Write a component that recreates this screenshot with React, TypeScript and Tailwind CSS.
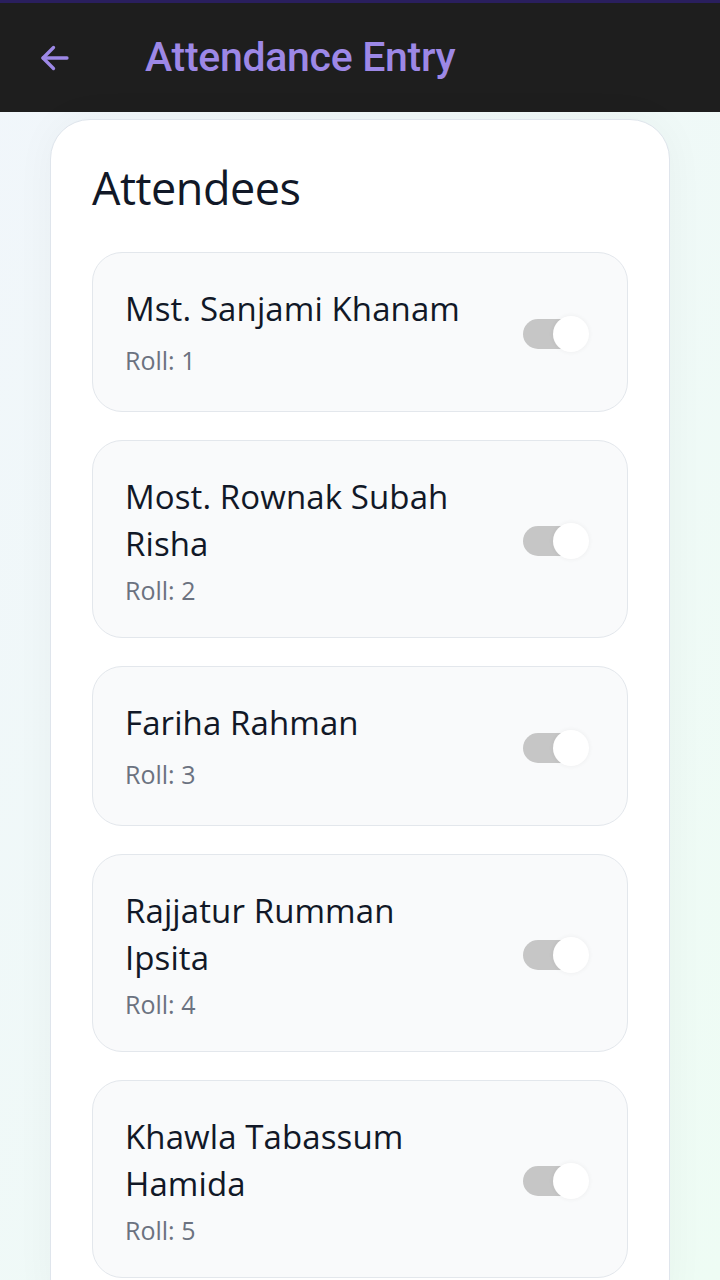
import React from "react";

const people = [
  { name: "Mst. Sanjami Khanam", roll: 1 },
  { name: "Most. Rownak Subah Risha", roll: 2 },
  { name: "Fariha Rahman", roll: 3 },
  { name: "Rajjatur Rumman Ipsita", roll: 4 },
  { name: "Khawla Tabassum Hamida", roll: 5 },
];

function Toggle() {
  return (
    <div className="relative w-[66px] h-[36px] shrink-0 self-center">
      <div className="absolute left-0 top-[3px] w-[56px] h-[30px] rounded-full bg-[#c6c6c6]" />
      <div className="absolute right-0 top-0 w-[36px] h-[36px] rounded-full bg-white shadow-[0_0_5px_rgba(0,0,0,0.06)]" />
    </div>
  );
}

export default function App() {
  return (
    <div className="w-[720px] h-[1280px] overflow-hidden flex flex-col bg-gradient-to-br from-[#f1f6fb] to-[#eefcf4]" style={{ fontFamily: "'Open Sans', sans-serif" }}>
      <div className="h-[112px] shrink-0 bg-[#1e1e1e] border-t-[3px] border-[#2a1f5e] flex items-center">
        <svg className="ml-[37px]" width="36" height="36" viewBox="0 0 24 24" fill="none" stroke="#9d88e6" strokeWidth="2.2" strokeLinecap="round" strokeLinejoin="round">
          <path d="M20 12H4" />
          <path d="M11 5l-7 7 7 7" />
        </svg>
        <div className="ml-[72px] text-[41px] font-medium text-[#9d88e6] tracking-[-0.3px]" style={{ fontFamily: "Roboto, sans-serif" }}>
          Attendance Entry
        </div>
      </div>
      <div className="flex-1 px-[50px] pt-[7px]">
        <div className="bg-white border border-[#dfe5ec] rounded-[40px] px-[41px] pt-[38px] pb-[40px] shadow-[0_0_40px_rgba(0,0,0,0.04)]">
          <div className="text-[45px] leading-[60px] text-[#111827] tracking-[-0.5px]">Attendees</div>
          <div className="mt-[34px] flex flex-col gap-[28px]">
            {people.map((p) => (
              <div key={p.roll} className="min-h-[160px] bg-[#f9fafb] border border-[#e3e7ec] rounded-[30px] pl-[32px] pr-[38px] pt-[32px] pb-[29px] flex items-stretch">
                <div className="flex-1 pr-[20px] flex flex-col">
                  <div className="text-[33px] leading-[47px] text-[#111827] max-w-[352px] tracking-[0.1px]">{p.name}</div>
                  <div className="my-auto pt-[5px]">
                    <div className="text-[25px] leading-[36px] text-[#6b7280]">Roll: {p.roll}</div>
                  </div>
                </div>
                <Toggle />
              </div>
            ))}
          </div>
        </div>
      </div>
    </div>
  );
}
